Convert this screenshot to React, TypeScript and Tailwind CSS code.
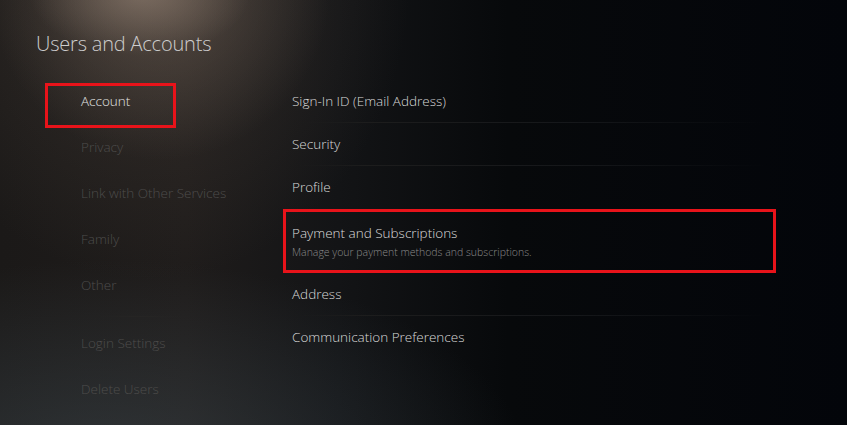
const leftItems = [
  { label: 'Account', active: true },
  { label: 'Privacy' },
  { label: 'Link with Other Services' },
  { label: 'Family' },
  { label: 'Other' },
]

const leftItemsLower = [{ label: 'Login Settings' }, { label: 'Delete Users' }]

const rightItems = [
  { label: 'Sign-In ID (Email Address)' },
  { label: 'Security' },
  { label: 'Profile', noLine: true },
  { label: 'Payment and Subscriptions', sub: 'Manage your payment methods and subscriptions.', marked: true },
  { label: 'Address' },
  { label: 'Communication Preferences', noLine: true },
]

function LeftItem({ label, active }: { label: string; active?: boolean }) {
  return (
    <div className="relative flex h-[46px] items-center pl-[81px]">
      {active && (
        <div className="pointer-events-none absolute left-[45px] top-[5px] h-[45px] w-[131px] border-[3px] border-[#e8131a]" />
      )}
      <span className={active ? 'text-[13.5px] text-[#e4e4e4]' : 'text-[13.5px] text-[#4d4c4b]'}>{label}</span>
    </div>
  )
}

export default function App() {
  return (
    <div
      className="relative h-[425px] w-[847px] overflow-hidden bg-[radial-gradient(ellipse_110px_60px_at_140px_-5px,rgba(150,132,118,0.55),transparent),radial-gradient(ellipse_170px_170px_at_160px_-10px,rgba(120,104,92,0.5),transparent),radial-gradient(ellipse_260px_300px_at_150px_-20px,rgba(80,70,62,0.45),transparent),radial-gradient(ellipse_420px_210px_at_110px_470px,rgba(70,84,92,0.45),transparent),linear-gradient(to_right,#1b1918_0%,#1f1c1b_22%,#131416_40%,#07090b_60%,#03050a_100%)]"
      style={{ fontFamily: '"Open Sans", "Noto Sans", sans-serif' }}
    >
      <h1 className="pl-[36px] pt-[30px] text-[20px] font-light leading-[28px] tracking-[-0.2px] text-[#cdcdcd]">
        Users and Accounts
      </h1>

      <div className="flex pt-[22px]">
        {/* left menu */}
        <div className="-mt-[2px] w-[283px] shrink-0 font-light">
          {leftItems.map((it) => (
            <LeftItem key={it.label} label={it.label} active={it.active} />
          ))}
          <div className="ml-[100px] mr-[100px] mt-[8px] mb-[3px] h-px bg-[linear-gradient(to_right,transparent,#262524,transparent)]" />
          {leftItemsLower.map((it) => (
            <LeftItem key={it.label} label={it.label} />
          ))}
        </div>

        {/* right list */}
        <div className="w-[493px] font-light">
          {rightItems.map((it) =>
            it.marked ? (
              <div key={it.label} className="flex h-[64px] flex-col justify-center border-[3px] border-[#e8131a] pl-[6px]">
                <span className="text-[13.5px] leading-[18px] text-[#dcdcdc]">{it.label}</span>
                <span className="mt-[3px] text-[10.5px] leading-[14px] text-[#8a8a8a]">{it.sub}</span>
              </div>
            ) : (
              <div key={it.label} className="relative flex h-[43px] items-center pl-[9px]">
                <span className="text-[13.5px] text-[#d8d8d8]">{it.label}</span>
                {!it.noLine && (
                  <div className="absolute bottom-0 left-[10px] right-[10px] h-px bg-[linear-gradient(to_right,transparent,#1d1d1d_15%,#15171a_60%,transparent)]" />
                )}
              </div>
            )
          )}
        </div>
      </div>
    </div>
  )
}
